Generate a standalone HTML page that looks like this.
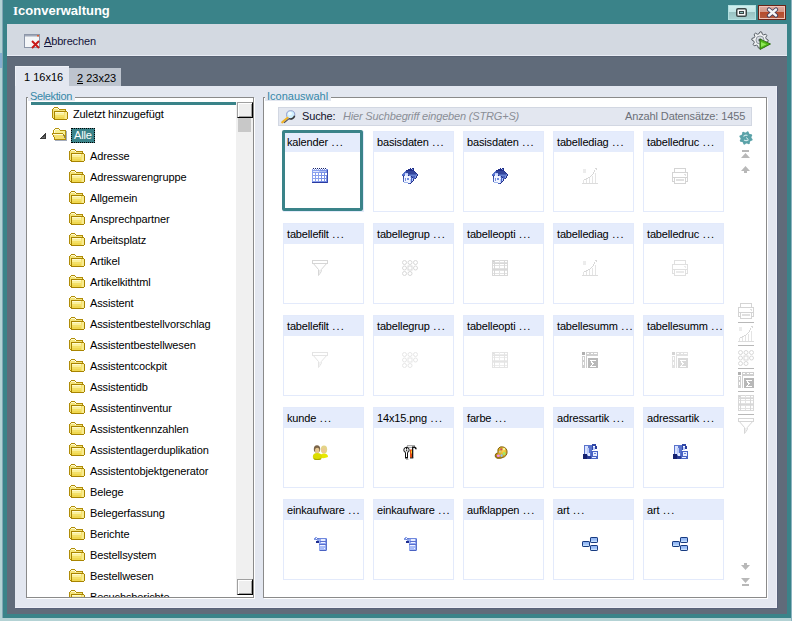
<!DOCTYPE html>
<html><head><meta charset="utf-8"><style>
*{box-sizing:border-box}
html,body{margin:0;padding:0}
body{width:792px;height:621px;overflow:hidden;position:relative;background:#b3d2d4;font-family:'Liberation Sans', sans-serif;font-size:11px;color:#000}
div,svg{position:absolute}
.frame{left:3px;top:0;width:788px;height:618px;background:#3a8389}
.title{left:13px;top:3px;letter-spacing:0px;font-weight:bold;font-size:13px;line-height:16px;color:#fff;white-space:nowrap}
.tb{left:7px;top:24px;width:780px;height:32px;background:#d3d9e1;border-bottom:1px solid #e8ecf4}
.content{left:7px;top:56px;width:780px;height:558px;background:#606b7a;border-top:1px solid #566172}
.tab{line-height:13px;white-space:nowrap}
.panel{left:15px;top:86px;width:762px;height:522px;background:#e3e7f0;border-right:1px solid #eceef6;border-bottom:1px solid #eceef6;box-shadow:1px 1px 0 #58627a}
.gb{border:1px solid #8a8a8a;box-shadow:inset 1px 1px 0 #fff, 1px 1px 0 #fff}
.gl{background:#e3e7f0;color:#3687a8;line-height:13px;padding:0 3px 0 2px;white-space:nowrap;height:11px;overflow:visible;letter-spacing:-0.37px}
.t{line-height:13px;white-space:nowrap;letter-spacing:-0.12px}
.sbb{width:16px;height:16px;background:#eeeeee;border-top:1px solid #a0a0a0;border-left:1px solid #a0a0a0;border-right:1px solid #000;border-bottom:1px solid #000;box-shadow:inset 1px 1px 0 #fff, inset -1px -1px 0 #a0a0a0}
.sel{width:24px;height:15px;background:#3a8389;border:1px dotted #000}
.card{width:81px;height:81px;border:1px solid #e3eafb;background:#fff}
.ch{left:0;top:0;width:79px;height:20px;background:#e5ecfc;padding:0 0 0 3px;line-height:13px;padding-top:4px;white-space:nowrap}
.ci{width:16px;height:16px}
.hw{letter-spacing:-0.15px}
.dots{letter-spacing:1.1px;margin-left:0.5px}
.ci svg{left:0;top:0}
.selcard{width:81px;height:81px;border:3px solid #3a8389;border-radius:2px}
</style></head><body>
<div class="frame"></div>
<div style="left:2px;top:0;width:1px;height:618px;background:#80a6b4"></div>
<div style="left:0;top:53px;width:2px;height:15px;background:#86aed0"></div>
<div style="left:791px;top:0;width:1px;height:621px;background:#8cb4c0"></div>
<div class="title"><span style="font-family:'Liberation Serif',serif;font-size:13px;line-height:10px;">I</span>converwaltung</div>
<!-- title buttons -->
<div style="left:728px;top:5px;width:28px;height:15px;background:linear-gradient(#d0eeee 0,#c0e6e6 47%,#98c2c2 47%,#a8d2d2 100%);border:1px solid #b2e0e0"></div>
<svg style="left:736px;top:8px" width="11" height="9" viewBox="0 0 11 9"><rect x="0.75" y="0.75" width="9.5" height="7.5" rx="1.3" fill="#f8f8f8" stroke="#3a4646" stroke-width="1.5"/><rect x="3.5" y="3.5" width="4" height="2" fill="#8cbaba" stroke="#3a4646" stroke-width="1"/></svg>
<div style="left:758px;top:5px;width:28px;height:15px;background:#6a2418;padding:1px"><div style="left:1px;top:1px;width:26px;height:13px;border:1px solid #f2c4b8;background:linear-gradient(#dca89c 0,#d49888 42%,#b84a2a 42%,#b45a3e 100%)"></div></div>
<svg style="left:766px;top:7px" width="13" height="11" viewBox="0 0 13 11"><path d="M3 2.5 L10 8.5 M10 2.5 L3 8.5" stroke="#3c3c5c" stroke-width="4.2" stroke-linecap="round"/><path d="M3 2.5 L10 8.5 M10 2.5 L3 8.5" stroke="#f6f6f6" stroke-width="2.4" stroke-linecap="round"/></svg>

<div class="tb"></div>
<!-- abbrechen icon -->
<svg style="left:24px;top:34px" width="17" height="16" viewBox="0 0 17 16">
<rect x="0.5" y="0.5" width="15" height="13" fill="#f4f6f8" stroke="#8c96a8"/>
<rect x="1" y="1" width="14" height="1.5" fill="#a0a8b8"/>
<rect x="13" y="1" width="2" height="1.5" fill="#e06030"/>
<path d="M8 7 L15 14 M15 7 L8 14" stroke="#c81818" stroke-width="2"/>
</svg>
<div class="t" style="left:44px;top:35px;color:#14143a;letter-spacing:-0.15px">Abbrechen</div>
<div style="left:44px;top:46px;width:8px;height:1px;background:#14143a"></div>
<!-- gear play icon -->
<svg style="left:751px;top:31px" width="21" height="19" viewBox="0 0 21 19">
<path d="M9.00 0.80 L10.60 0.96 L11.37 3.27 L12.44 3.84 L14.80 3.20 L15.82 4.44 L14.73 6.63 L15.08 7.79 L17.20 9.00 L17.04 10.60 L14.73 11.37 L14.16 12.44 L14.80 14.80 L13.56 15.82 L11.37 14.73 L10.21 15.08 L9.00 17.20 L7.40 17.04 L6.63 14.73 L5.56 14.16 L3.20 14.80 L2.18 13.56 L3.27 11.37 L2.92 10.21 L0.80 9.00 L0.96 7.40 L3.27 6.63 L3.84 5.56 L3.20 3.20 L4.44 2.18 L6.63 3.27 L7.79 2.92Z" fill="#eef0f2" stroke="#4a5058" stroke-width="0.9"/>
<circle cx="9" cy="9" r="4" fill="#d8dce2" stroke="#8a929c" stroke-width="0.9"/>
<circle cx="9" cy="9" r="1.6" fill="#505868"/>
<path d="M9 8 L19.5 13 L9 18.5Z" fill="#50b818" stroke="#2a6a10" stroke-width="0.9"/>
<path d="M10 11 L15.5 13.3 L10 16Z" fill="#90e858"/>
</svg>
<div class="content"></div>
<!-- tabs -->
<div style="left:68px;top:68px;width:53px;height:18px;background:#bdc4ce"></div>
<div class="tab" style="left:77px;top:72px">2 23x23</div>
<div style="left:77px;top:83px;width:6px;height:1px;background:#000"></div>
<div style="left:15px;top:66px;width:54px;height:21px;background:#e3e7f0;border-top:1px solid #eef1f7;border-left:1px solid #eef1f7"></div>
<div class="panel"></div>
<div class="tab" style="left:24px;top:71px">1 16x16</div>

<!-- group box selektion -->
<div class="gb" style="left:26px;top:97px;width:228px;height:501px"></div>
<div style="left:27px;top:98px;width:226px;height:499px;background:#fff;overflow:hidden">
<div style="left:4px;top:4px;width:205px;height:3px;background:#3a8389"></div>
<svg class="ic" style="left:25px;top:9px" width="16" height="14" viewBox="0 0 16 14" shape-rendering="crispEdges">
<path d="M2 0h4v1H2zM1 1h1v1H1zM6 1h1v1H6zM7 2h6v1H7zM0 2h1v9H0zM13 2h1v2h-1z" fill="#b08c08"/>
<path d="M1 2h5v1h7v1H2v8H1z" fill="#f4e47a"/>
<path d="M2 1h4v1H2z" fill="#fffbd0"/>
<rect x="3" y="5" width="12" height="7" fill="#f0d850"/>
<rect x="3" y="8" width="12" height="2" fill="#f4e068"/>
<rect x="3" y="5" width="12" height="3" fill="#faf09a"/>
<rect x="3" y="5" width="12" height="1" fill="#fffbd0"/>
<path d="M2 4h13v1H2zM2 5h1v7H2zM15 5h1v7h-1zM2 12h13v1H2zM1 11h1v1H1z" fill="#a88400"/>
<rect x="12" y="5" width="1" height="7" fill="#f6e070"/><rect x="13" y="5" width="2" height="7" fill="#f8ec90"/>
</svg><div class="t" style="left:46px;top:10px">Zuletzt hinzugefügt</div><svg class="ic" style="left:13px;top:35px" width="7" height="7" viewBox="0 0 7 7" shape-rendering="crispEdges"><path d="M5 0h1v6H0V5h1V4h1V3h1V2h1V1h1z" fill="#3a3a3a"/><path d="M4 3h1v2H2V4h1z" fill="#6a6a6a"/></svg><svg class="ic" style="left:25px;top:30px" width="16" height="14" viewBox="0 0 16 14" shape-rendering="crispEdges">
<path d="M2 1h6v1h5v10H2z" fill="#f8f090"/>
<path d="M3 1h4v1H3z" fill="#fffce0"/>
<path d="M2 2h1v3H2z" fill="#fffce0"/>
<path d="M14 3h1v10h-1zM3 12h12v1H3z" fill="#a4acbc"/>
<path d="M3 0h4v1H3zM2 1h1v1H2zM7 1h1v1H7zM8 2h5v1H8zM1 2h1v3H1zM13 2h1v10h-1z" fill="#b49410"/>
<path d="M1 6h10v1H1zM1 7h11v1H1zM2 8h10v1H2zM2 9h11v1H2zM3 10h10v1H3z" fill="#f4e070"/>
<path d="M1 6h10v1H1z" fill="#fffbd8"/>
<path d="M0 5h11v1H0zM0 6h1v1H0zM1 7h1v2H1zM2 9h1v2H2zM2 11h12v1H2zM11 6h1v1h-1zM12 7h1v2h-1z" fill="#b08c0c"/>
<path d="M11 7h1v1h-1zM12 9h1v1h-1z" fill="#7a7e90"/>
</svg><div class="sel" style="left:44px;top:30px"></div><div class="t" style="left:47px;top:31px;color:#fff">Alle</div><svg class="ic" style="left:42px;top:51px" width="16" height="14" viewBox="0 0 16 14" shape-rendering="crispEdges">
<path d="M2 0h4v1H2zM1 1h1v1H1zM6 1h1v1H6zM7 2h6v1H7zM0 2h1v9H0zM13 2h1v2h-1z" fill="#b08c08"/>
<path d="M1 2h5v1h7v1H2v8H1z" fill="#f4e47a"/>
<path d="M2 1h4v1H2z" fill="#fffbd0"/>
<rect x="3" y="5" width="12" height="7" fill="#f0d850"/>
<rect x="3" y="8" width="12" height="2" fill="#f4e068"/>
<rect x="3" y="5" width="12" height="3" fill="#faf09a"/>
<rect x="3" y="5" width="12" height="1" fill="#fffbd0"/>
<path d="M2 4h13v1H2zM2 5h1v7H2zM15 5h1v7h-1zM2 12h13v1H2zM1 11h1v1H1z" fill="#a88400"/>
<rect x="12" y="5" width="1" height="7" fill="#f6e070"/><rect x="13" y="5" width="2" height="7" fill="#f8ec90"/>
</svg><div class="t" style="left:63px;top:52px">Adresse</div><svg class="ic" style="left:42px;top:72px" width="16" height="14" viewBox="0 0 16 14" shape-rendering="crispEdges">
<path d="M2 0h4v1H2zM1 1h1v1H1zM6 1h1v1H6zM7 2h6v1H7zM0 2h1v9H0zM13 2h1v2h-1z" fill="#b08c08"/>
<path d="M1 2h5v1h7v1H2v8H1z" fill="#f4e47a"/>
<path d="M2 1h4v1H2z" fill="#fffbd0"/>
<rect x="3" y="5" width="12" height="7" fill="#f0d850"/>
<rect x="3" y="8" width="12" height="2" fill="#f4e068"/>
<rect x="3" y="5" width="12" height="3" fill="#faf09a"/>
<rect x="3" y="5" width="12" height="1" fill="#fffbd0"/>
<path d="M2 4h13v1H2zM2 5h1v7H2zM15 5h1v7h-1zM2 12h13v1H2zM1 11h1v1H1z" fill="#a88400"/>
<rect x="12" y="5" width="1" height="7" fill="#f6e070"/><rect x="13" y="5" width="2" height="7" fill="#f8ec90"/>
</svg><div class="t" style="left:63px;top:73px">Adresswarengruppe</div><svg class="ic" style="left:42px;top:93px" width="16" height="14" viewBox="0 0 16 14" shape-rendering="crispEdges">
<path d="M2 0h4v1H2zM1 1h1v1H1zM6 1h1v1H6zM7 2h6v1H7zM0 2h1v9H0zM13 2h1v2h-1z" fill="#b08c08"/>
<path d="M1 2h5v1h7v1H2v8H1z" fill="#f4e47a"/>
<path d="M2 1h4v1H2z" fill="#fffbd0"/>
<rect x="3" y="5" width="12" height="7" fill="#f0d850"/>
<rect x="3" y="8" width="12" height="2" fill="#f4e068"/>
<rect x="3" y="5" width="12" height="3" fill="#faf09a"/>
<rect x="3" y="5" width="12" height="1" fill="#fffbd0"/>
<path d="M2 4h13v1H2zM2 5h1v7H2zM15 5h1v7h-1zM2 12h13v1H2zM1 11h1v1H1z" fill="#a88400"/>
<rect x="12" y="5" width="1" height="7" fill="#f6e070"/><rect x="13" y="5" width="2" height="7" fill="#f8ec90"/>
</svg><div class="t" style="left:63px;top:94px">Allgemein</div><svg class="ic" style="left:42px;top:114px" width="16" height="14" viewBox="0 0 16 14" shape-rendering="crispEdges">
<path d="M2 0h4v1H2zM1 1h1v1H1zM6 1h1v1H6zM7 2h6v1H7zM0 2h1v9H0zM13 2h1v2h-1z" fill="#b08c08"/>
<path d="M1 2h5v1h7v1H2v8H1z" fill="#f4e47a"/>
<path d="M2 1h4v1H2z" fill="#fffbd0"/>
<rect x="3" y="5" width="12" height="7" fill="#f0d850"/>
<rect x="3" y="8" width="12" height="2" fill="#f4e068"/>
<rect x="3" y="5" width="12" height="3" fill="#faf09a"/>
<rect x="3" y="5" width="12" height="1" fill="#fffbd0"/>
<path d="M2 4h13v1H2zM2 5h1v7H2zM15 5h1v7h-1zM2 12h13v1H2zM1 11h1v1H1z" fill="#a88400"/>
<rect x="12" y="5" width="1" height="7" fill="#f6e070"/><rect x="13" y="5" width="2" height="7" fill="#f8ec90"/>
</svg><div class="t" style="left:63px;top:115px">Ansprechpartner</div><svg class="ic" style="left:42px;top:135px" width="16" height="14" viewBox="0 0 16 14" shape-rendering="crispEdges">
<path d="M2 0h4v1H2zM1 1h1v1H1zM6 1h1v1H6zM7 2h6v1H7zM0 2h1v9H0zM13 2h1v2h-1z" fill="#b08c08"/>
<path d="M1 2h5v1h7v1H2v8H1z" fill="#f4e47a"/>
<path d="M2 1h4v1H2z" fill="#fffbd0"/>
<rect x="3" y="5" width="12" height="7" fill="#f0d850"/>
<rect x="3" y="8" width="12" height="2" fill="#f4e068"/>
<rect x="3" y="5" width="12" height="3" fill="#faf09a"/>
<rect x="3" y="5" width="12" height="1" fill="#fffbd0"/>
<path d="M2 4h13v1H2zM2 5h1v7H2zM15 5h1v7h-1zM2 12h13v1H2zM1 11h1v1H1z" fill="#a88400"/>
<rect x="12" y="5" width="1" height="7" fill="#f6e070"/><rect x="13" y="5" width="2" height="7" fill="#f8ec90"/>
</svg><div class="t" style="left:63px;top:136px">Arbeitsplatz</div><svg class="ic" style="left:42px;top:156px" width="16" height="14" viewBox="0 0 16 14" shape-rendering="crispEdges">
<path d="M2 0h4v1H2zM1 1h1v1H1zM6 1h1v1H6zM7 2h6v1H7zM0 2h1v9H0zM13 2h1v2h-1z" fill="#b08c08"/>
<path d="M1 2h5v1h7v1H2v8H1z" fill="#f4e47a"/>
<path d="M2 1h4v1H2z" fill="#fffbd0"/>
<rect x="3" y="5" width="12" height="7" fill="#f0d850"/>
<rect x="3" y="8" width="12" height="2" fill="#f4e068"/>
<rect x="3" y="5" width="12" height="3" fill="#faf09a"/>
<rect x="3" y="5" width="12" height="1" fill="#fffbd0"/>
<path d="M2 4h13v1H2zM2 5h1v7H2zM15 5h1v7h-1zM2 12h13v1H2zM1 11h1v1H1z" fill="#a88400"/>
<rect x="12" y="5" width="1" height="7" fill="#f6e070"/><rect x="13" y="5" width="2" height="7" fill="#f8ec90"/>
</svg><div class="t" style="left:63px;top:157px">Artikel</div><svg class="ic" style="left:42px;top:177px" width="16" height="14" viewBox="0 0 16 14" shape-rendering="crispEdges">
<path d="M2 0h4v1H2zM1 1h1v1H1zM6 1h1v1H6zM7 2h6v1H7zM0 2h1v9H0zM13 2h1v2h-1z" fill="#b08c08"/>
<path d="M1 2h5v1h7v1H2v8H1z" fill="#f4e47a"/>
<path d="M2 1h4v1H2z" fill="#fffbd0"/>
<rect x="3" y="5" width="12" height="7" fill="#f0d850"/>
<rect x="3" y="8" width="12" height="2" fill="#f4e068"/>
<rect x="3" y="5" width="12" height="3" fill="#faf09a"/>
<rect x="3" y="5" width="12" height="1" fill="#fffbd0"/>
<path d="M2 4h13v1H2zM2 5h1v7H2zM15 5h1v7h-1zM2 12h13v1H2zM1 11h1v1H1z" fill="#a88400"/>
<rect x="12" y="5" width="1" height="7" fill="#f6e070"/><rect x="13" y="5" width="2" height="7" fill="#f8ec90"/>
</svg><div class="t" style="left:63px;top:178px">Artikelkithtml</div><svg class="ic" style="left:42px;top:198px" width="16" height="14" viewBox="0 0 16 14" shape-rendering="crispEdges">
<path d="M2 0h4v1H2zM1 1h1v1H1zM6 1h1v1H6zM7 2h6v1H7zM0 2h1v9H0zM13 2h1v2h-1z" fill="#b08c08"/>
<path d="M1 2h5v1h7v1H2v8H1z" fill="#f4e47a"/>
<path d="M2 1h4v1H2z" fill="#fffbd0"/>
<rect x="3" y="5" width="12" height="7" fill="#f0d850"/>
<rect x="3" y="8" width="12" height="2" fill="#f4e068"/>
<rect x="3" y="5" width="12" height="3" fill="#faf09a"/>
<rect x="3" y="5" width="12" height="1" fill="#fffbd0"/>
<path d="M2 4h13v1H2zM2 5h1v7H2zM15 5h1v7h-1zM2 12h13v1H2zM1 11h1v1H1z" fill="#a88400"/>
<rect x="12" y="5" width="1" height="7" fill="#f6e070"/><rect x="13" y="5" width="2" height="7" fill="#f8ec90"/>
</svg><div class="t" style="left:63px;top:199px">Assistent</div><svg class="ic" style="left:42px;top:219px" width="16" height="14" viewBox="0 0 16 14" shape-rendering="crispEdges">
<path d="M2 0h4v1H2zM1 1h1v1H1zM6 1h1v1H6zM7 2h6v1H7zM0 2h1v9H0zM13 2h1v2h-1z" fill="#b08c08"/>
<path d="M1 2h5v1h7v1H2v8H1z" fill="#f4e47a"/>
<path d="M2 1h4v1H2z" fill="#fffbd0"/>
<rect x="3" y="5" width="12" height="7" fill="#f0d850"/>
<rect x="3" y="8" width="12" height="2" fill="#f4e068"/>
<rect x="3" y="5" width="12" height="3" fill="#faf09a"/>
<rect x="3" y="5" width="12" height="1" fill="#fffbd0"/>
<path d="M2 4h13v1H2zM2 5h1v7H2zM15 5h1v7h-1zM2 12h13v1H2zM1 11h1v1H1z" fill="#a88400"/>
<rect x="12" y="5" width="1" height="7" fill="#f6e070"/><rect x="13" y="5" width="2" height="7" fill="#f8ec90"/>
</svg><div class="t" style="left:63px;top:220px">Assistentbestellvorschlag</div><svg class="ic" style="left:42px;top:240px" width="16" height="14" viewBox="0 0 16 14" shape-rendering="crispEdges">
<path d="M2 0h4v1H2zM1 1h1v1H1zM6 1h1v1H6zM7 2h6v1H7zM0 2h1v9H0zM13 2h1v2h-1z" fill="#b08c08"/>
<path d="M1 2h5v1h7v1H2v8H1z" fill="#f4e47a"/>
<path d="M2 1h4v1H2z" fill="#fffbd0"/>
<rect x="3" y="5" width="12" height="7" fill="#f0d850"/>
<rect x="3" y="8" width="12" height="2" fill="#f4e068"/>
<rect x="3" y="5" width="12" height="3" fill="#faf09a"/>
<rect x="3" y="5" width="12" height="1" fill="#fffbd0"/>
<path d="M2 4h13v1H2zM2 5h1v7H2zM15 5h1v7h-1zM2 12h13v1H2zM1 11h1v1H1z" fill="#a88400"/>
<rect x="12" y="5" width="1" height="7" fill="#f6e070"/><rect x="13" y="5" width="2" height="7" fill="#f8ec90"/>
</svg><div class="t" style="left:63px;top:241px">Assistentbestellwesen</div><svg class="ic" style="left:42px;top:261px" width="16" height="14" viewBox="0 0 16 14" shape-rendering="crispEdges">
<path d="M2 0h4v1H2zM1 1h1v1H1zM6 1h1v1H6zM7 2h6v1H7zM0 2h1v9H0zM13 2h1v2h-1z" fill="#b08c08"/>
<path d="M1 2h5v1h7v1H2v8H1z" fill="#f4e47a"/>
<path d="M2 1h4v1H2z" fill="#fffbd0"/>
<rect x="3" y="5" width="12" height="7" fill="#f0d850"/>
<rect x="3" y="8" width="12" height="2" fill="#f4e068"/>
<rect x="3" y="5" width="12" height="3" fill="#faf09a"/>
<rect x="3" y="5" width="12" height="1" fill="#fffbd0"/>
<path d="M2 4h13v1H2zM2 5h1v7H2zM15 5h1v7h-1zM2 12h13v1H2zM1 11h1v1H1z" fill="#a88400"/>
<rect x="12" y="5" width="1" height="7" fill="#f6e070"/><rect x="13" y="5" width="2" height="7" fill="#f8ec90"/>
</svg><div class="t" style="left:63px;top:262px">Assistentcockpit</div><svg class="ic" style="left:42px;top:282px" width="16" height="14" viewBox="0 0 16 14" shape-rendering="crispEdges">
<path d="M2 0h4v1H2zM1 1h1v1H1zM6 1h1v1H6zM7 2h6v1H7zM0 2h1v9H0zM13 2h1v2h-1z" fill="#b08c08"/>
<path d="M1 2h5v1h7v1H2v8H1z" fill="#f4e47a"/>
<path d="M2 1h4v1H2z" fill="#fffbd0"/>
<rect x="3" y="5" width="12" height="7" fill="#f0d850"/>
<rect x="3" y="8" width="12" height="2" fill="#f4e068"/>
<rect x="3" y="5" width="12" height="3" fill="#faf09a"/>
<rect x="3" y="5" width="12" height="1" fill="#fffbd0"/>
<path d="M2 4h13v1H2zM2 5h1v7H2zM15 5h1v7h-1zM2 12h13v1H2zM1 11h1v1H1z" fill="#a88400"/>
<rect x="12" y="5" width="1" height="7" fill="#f6e070"/><rect x="13" y="5" width="2" height="7" fill="#f8ec90"/>
</svg><div class="t" style="left:63px;top:283px">Assistentidb</div><svg class="ic" style="left:42px;top:303px" width="16" height="14" viewBox="0 0 16 14" shape-rendering="crispEdges">
<path d="M2 0h4v1H2zM1 1h1v1H1zM6 1h1v1H6zM7 2h6v1H7zM0 2h1v9H0zM13 2h1v2h-1z" fill="#b08c08"/>
<path d="M1 2h5v1h7v1H2v8H1z" fill="#f4e47a"/>
<path d="M2 1h4v1H2z" fill="#fffbd0"/>
<rect x="3" y="5" width="12" height="7" fill="#f0d850"/>
<rect x="3" y="8" width="12" height="2" fill="#f4e068"/>
<rect x="3" y="5" width="12" height="3" fill="#faf09a"/>
<rect x="3" y="5" width="12" height="1" fill="#fffbd0"/>
<path d="M2 4h13v1H2zM2 5h1v7H2zM15 5h1v7h-1zM2 12h13v1H2zM1 11h1v1H1z" fill="#a88400"/>
<rect x="12" y="5" width="1" height="7" fill="#f6e070"/><rect x="13" y="5" width="2" height="7" fill="#f8ec90"/>
</svg><div class="t" style="left:63px;top:304px">Assistentinventur</div><svg class="ic" style="left:42px;top:324px" width="16" height="14" viewBox="0 0 16 14" shape-rendering="crispEdges">
<path d="M2 0h4v1H2zM1 1h1v1H1zM6 1h1v1H6zM7 2h6v1H7zM0 2h1v9H0zM13 2h1v2h-1z" fill="#b08c08"/>
<path d="M1 2h5v1h7v1H2v8H1z" fill="#f4e47a"/>
<path d="M2 1h4v1H2z" fill="#fffbd0"/>
<rect x="3" y="5" width="12" height="7" fill="#f0d850"/>
<rect x="3" y="8" width="12" height="2" fill="#f4e068"/>
<rect x="3" y="5" width="12" height="3" fill="#faf09a"/>
<rect x="3" y="5" width="12" height="1" fill="#fffbd0"/>
<path d="M2 4h13v1H2zM2 5h1v7H2zM15 5h1v7h-1zM2 12h13v1H2zM1 11h1v1H1z" fill="#a88400"/>
<rect x="12" y="5" width="1" height="7" fill="#f6e070"/><rect x="13" y="5" width="2" height="7" fill="#f8ec90"/>
</svg><div class="t" style="left:63px;top:325px">Assistentkennzahlen</div><svg class="ic" style="left:42px;top:345px" width="16" height="14" viewBox="0 0 16 14" shape-rendering="crispEdges">
<path d="M2 0h4v1H2zM1 1h1v1H1zM6 1h1v1H6zM7 2h6v1H7zM0 2h1v9H0zM13 2h1v2h-1z" fill="#b08c08"/>
<path d="M1 2h5v1h7v1H2v8H1z" fill="#f4e47a"/>
<path d="M2 1h4v1H2z" fill="#fffbd0"/>
<rect x="3" y="5" width="12" height="7" fill="#f0d850"/>
<rect x="3" y="8" width="12" height="2" fill="#f4e068"/>
<rect x="3" y="5" width="12" height="3" fill="#faf09a"/>
<rect x="3" y="5" width="12" height="1" fill="#fffbd0"/>
<path d="M2 4h13v1H2zM2 5h1v7H2zM15 5h1v7h-1zM2 12h13v1H2zM1 11h1v1H1z" fill="#a88400"/>
<rect x="12" y="5" width="1" height="7" fill="#f6e070"/><rect x="13" y="5" width="2" height="7" fill="#f8ec90"/>
</svg><div class="t" style="left:63px;top:346px">Assistentlagerduplikation</div><svg class="ic" style="left:42px;top:366px" width="16" height="14" viewBox="0 0 16 14" shape-rendering="crispEdges">
<path d="M2 0h4v1H2zM1 1h1v1H1zM6 1h1v1H6zM7 2h6v1H7zM0 2h1v9H0zM13 2h1v2h-1z" fill="#b08c08"/>
<path d="M1 2h5v1h7v1H2v8H1z" fill="#f4e47a"/>
<path d="M2 1h4v1H2z" fill="#fffbd0"/>
<rect x="3" y="5" width="12" height="7" fill="#f0d850"/>
<rect x="3" y="8" width="12" height="2" fill="#f4e068"/>
<rect x="3" y="5" width="12" height="3" fill="#faf09a"/>
<rect x="3" y="5" width="12" height="1" fill="#fffbd0"/>
<path d="M2 4h13v1H2zM2 5h1v7H2zM15 5h1v7h-1zM2 12h13v1H2zM1 11h1v1H1z" fill="#a88400"/>
<rect x="12" y="5" width="1" height="7" fill="#f6e070"/><rect x="13" y="5" width="2" height="7" fill="#f8ec90"/>
</svg><div class="t" style="left:63px;top:367px">Assistentobjektgenerator</div><svg class="ic" style="left:42px;top:387px" width="16" height="14" viewBox="0 0 16 14" shape-rendering="crispEdges">
<path d="M2 0h4v1H2zM1 1h1v1H1zM6 1h1v1H6zM7 2h6v1H7zM0 2h1v9H0zM13 2h1v2h-1z" fill="#b08c08"/>
<path d="M1 2h5v1h7v1H2v8H1z" fill="#f4e47a"/>
<path d="M2 1h4v1H2z" fill="#fffbd0"/>
<rect x="3" y="5" width="12" height="7" fill="#f0d850"/>
<rect x="3" y="8" width="12" height="2" fill="#f4e068"/>
<rect x="3" y="5" width="12" height="3" fill="#faf09a"/>
<rect x="3" y="5" width="12" height="1" fill="#fffbd0"/>
<path d="M2 4h13v1H2zM2 5h1v7H2zM15 5h1v7h-1zM2 12h13v1H2zM1 11h1v1H1z" fill="#a88400"/>
<rect x="12" y="5" width="1" height="7" fill="#f6e070"/><rect x="13" y="5" width="2" height="7" fill="#f8ec90"/>
</svg><div class="t" style="left:63px;top:388px">Belege</div><svg class="ic" style="left:42px;top:408px" width="16" height="14" viewBox="0 0 16 14" shape-rendering="crispEdges">
<path d="M2 0h4v1H2zM1 1h1v1H1zM6 1h1v1H6zM7 2h6v1H7zM0 2h1v9H0zM13 2h1v2h-1z" fill="#b08c08"/>
<path d="M1 2h5v1h7v1H2v8H1z" fill="#f4e47a"/>
<path d="M2 1h4v1H2z" fill="#fffbd0"/>
<rect x="3" y="5" width="12" height="7" fill="#f0d850"/>
<rect x="3" y="8" width="12" height="2" fill="#f4e068"/>
<rect x="3" y="5" width="12" height="3" fill="#faf09a"/>
<rect x="3" y="5" width="12" height="1" fill="#fffbd0"/>
<path d="M2 4h13v1H2zM2 5h1v7H2zM15 5h1v7h-1zM2 12h13v1H2zM1 11h1v1H1z" fill="#a88400"/>
<rect x="12" y="5" width="1" height="7" fill="#f6e070"/><rect x="13" y="5" width="2" height="7" fill="#f8ec90"/>
</svg><div class="t" style="left:63px;top:409px">Belegerfassung</div><svg class="ic" style="left:42px;top:429px" width="16" height="14" viewBox="0 0 16 14" shape-rendering="crispEdges">
<path d="M2 0h4v1H2zM1 1h1v1H1zM6 1h1v1H6zM7 2h6v1H7zM0 2h1v9H0zM13 2h1v2h-1z" fill="#b08c08"/>
<path d="M1 2h5v1h7v1H2v8H1z" fill="#f4e47a"/>
<path d="M2 1h4v1H2z" fill="#fffbd0"/>
<rect x="3" y="5" width="12" height="7" fill="#f0d850"/>
<rect x="3" y="8" width="12" height="2" fill="#f4e068"/>
<rect x="3" y="5" width="12" height="3" fill="#faf09a"/>
<rect x="3" y="5" width="12" height="1" fill="#fffbd0"/>
<path d="M2 4h13v1H2zM2 5h1v7H2zM15 5h1v7h-1zM2 12h13v1H2zM1 11h1v1H1z" fill="#a88400"/>
<rect x="12" y="5" width="1" height="7" fill="#f6e070"/><rect x="13" y="5" width="2" height="7" fill="#f8ec90"/>
</svg><div class="t" style="left:63px;top:430px">Berichte</div><svg class="ic" style="left:42px;top:450px" width="16" height="14" viewBox="0 0 16 14" shape-rendering="crispEdges">
<path d="M2 0h4v1H2zM1 1h1v1H1zM6 1h1v1H6zM7 2h6v1H7zM0 2h1v9H0zM13 2h1v2h-1z" fill="#b08c08"/>
<path d="M1 2h5v1h7v1H2v8H1z" fill="#f4e47a"/>
<path d="M2 1h4v1H2z" fill="#fffbd0"/>
<rect x="3" y="5" width="12" height="7" fill="#f0d850"/>
<rect x="3" y="8" width="12" height="2" fill="#f4e068"/>
<rect x="3" y="5" width="12" height="3" fill="#faf09a"/>
<rect x="3" y="5" width="12" height="1" fill="#fffbd0"/>
<path d="M2 4h13v1H2zM2 5h1v7H2zM15 5h1v7h-1zM2 12h13v1H2zM1 11h1v1H1z" fill="#a88400"/>
<rect x="12" y="5" width="1" height="7" fill="#f6e070"/><rect x="13" y="5" width="2" height="7" fill="#f8ec90"/>
</svg><div class="t" style="left:63px;top:451px">Bestellsystem</div><svg class="ic" style="left:42px;top:471px" width="16" height="14" viewBox="0 0 16 14" shape-rendering="crispEdges">
<path d="M2 0h4v1H2zM1 1h1v1H1zM6 1h1v1H6zM7 2h6v1H7zM0 2h1v9H0zM13 2h1v2h-1z" fill="#b08c08"/>
<path d="M1 2h5v1h7v1H2v8H1z" fill="#f4e47a"/>
<path d="M2 1h4v1H2z" fill="#fffbd0"/>
<rect x="3" y="5" width="12" height="7" fill="#f0d850"/>
<rect x="3" y="8" width="12" height="2" fill="#f4e068"/>
<rect x="3" y="5" width="12" height="3" fill="#faf09a"/>
<rect x="3" y="5" width="12" height="1" fill="#fffbd0"/>
<path d="M2 4h13v1H2zM2 5h1v7H2zM15 5h1v7h-1zM2 12h13v1H2zM1 11h1v1H1z" fill="#a88400"/>
<rect x="12" y="5" width="1" height="7" fill="#f6e070"/><rect x="13" y="5" width="2" height="7" fill="#f8ec90"/>
</svg><div class="t" style="left:63px;top:472px">Bestellwesen</div><svg class="ic" style="left:42px;top:492px" width="16" height="14" viewBox="0 0 16 14" shape-rendering="crispEdges">
<path d="M2 0h4v1H2zM1 1h1v1H1zM6 1h1v1H6zM7 2h6v1H7zM0 2h1v9H0zM13 2h1v2h-1z" fill="#b08c08"/>
<path d="M1 2h5v1h7v1H2v8H1z" fill="#f4e47a"/>
<path d="M2 1h4v1H2z" fill="#fffbd0"/>
<rect x="3" y="5" width="12" height="7" fill="#f0d850"/>
<rect x="3" y="8" width="12" height="2" fill="#f4e068"/>
<rect x="3" y="5" width="12" height="3" fill="#faf09a"/>
<rect x="3" y="5" width="12" height="1" fill="#fffbd0"/>
<path d="M2 4h13v1H2zM2 5h1v7H2zM15 5h1v7h-1zM2 12h13v1H2zM1 11h1v1H1z" fill="#a88400"/>
<rect x="12" y="5" width="1" height="7" fill="#f6e070"/><rect x="13" y="5" width="2" height="7" fill="#f8ec90"/>
</svg><div class="t" style="left:63px;top:493px">Besuchsberichte</div>
<!-- scrollbar -->
<div style="left:209px;top:4px;width:17px;height:493px;background:#f0f0f0"></div>
<div class="sbb" style="left:210px;top:4px"></div>
<div style="left:211px;top:20px;width:13px;height:14px;background:#c8c8c8"></div>
<div class="sbb" style="left:210px;top:481px"></div>
</div>
<div class="gl" style="left:28px;top:90px">Selektion</div>

<!-- group box iconauswahl -->
<div class="gb" style="left:263px;top:97px;width:504px;height:501px"></div>
<div style="left:264px;top:98px;width:502px;height:499px;background:#fff"></div>
<div class="gl" style="left:265px;top:90px;letter-spacing:0">Iconauswahl</div>
<!-- search -->
<div style="left:278px;top:107px;width:474px;height:19px;background:#e3e7f0;border:1px solid #d2d7e2"></div>
<svg style="left:280px;top:108px" width="16" height="16" viewBox="0 0 16 16">
<circle cx="10.7" cy="6.8" r="4.1" fill="#d0f0ff" stroke="#8a94c8" stroke-width="0.9"/>
<path d="M14.6 7.8 A4.1 4.1 0 0 1 9 10.6" stroke="#383838" stroke-width="1.5" fill="none"/>
<circle cx="10" cy="5.6" r="1.9" fill="#f2fcff"/>
<path d="M7.6 9.8 L2.2 14.4" stroke="#f0b428" stroke-width="2.1" stroke-linecap="round"/>
<path d="M8.8 10.8 L4 14.8" stroke="#4a4a58" stroke-width="1.1"/>
</svg>
<div class="t" style="left:302px;top:110px;color:#10102a">Suche:</div>
<div class="t" style="left:343px;top:110px;color:#8a8e96;font-style:italic;letter-spacing:-0.17px">Hier Suchbegriff eingeben (STRG+S)</div>
<div class="t" style="left:625px;top:110px;color:#6c7078;letter-spacing:-0.12px">Anzahl Datensätze: 1455</div>

<div class="card" style="left:283px;top:131px"><div class="ch"><span class="hw">kalender</span> <span class="dots">...</span></div></div><div class="ci" style="left:312px;top:168px"><svg width="16" height="16" viewBox="0 0 16 16" shape-rendering="crispEdges">
<rect x="0" y="1" width="16" height="14" fill="#7890e6"/>
<rect x="0" y="1" width="8" height="13" fill="#8aa0ee"/>
<rect x="0" y="14" width="16" height="1" fill="#2a3aa0"/>
<rect x="15" y="2" width="1" height="13" fill="#3a4cb0"/>
<path d="M1 0h1v1H1zM3 0h1v1H3zM5 0h1v1H5zM7 0h1v1H7zM9 0h1v1H9zM11 0h1v1h-1zM13 0h1v1h-1z" fill="#14206a"/>
<path d="M1 1h1v1H1zM3 1h1v1H3zM5 1h1v1H5zM7 1h1v1H7zM9 1h1v1H9zM11 1h1v1h-1zM13 1h1v1h-1z" fill="#ffffff"/>
<rect x="1" y="3" width="6" height="1" fill="#e0e8ff"/><rect x="7" y="3" width="7" height="1" fill="#b0c0f4"/>
<path d="M1 5h2v2H1zM4 5h2v2H4zM7 5h2v2H7zM10 5h2v2h-2zM13 5h2v2h-2zM1 8h2v2H1zM4 8h2v2H4zM7 8h2v2H7zM10 8h2v2h-2zM13 8h1v2h-1zM1 11h2v2H1zM4 11h2v2H4zM7 11h2v2H7zM10 11h2v2h-2zM13 11h1v2h-1z" fill="#fff"/>
</svg></div><div class="card" style="left:373px;top:131px"><div class="ch"><span class="hw">basisdaten</span> <span class="dots">...</span></div></div><div class="ci" style="left:402px;top:168px"><svg width="16" height="16" viewBox="0 0 16 16" shape-rendering="crispEdges"><path d="M8 0h1v1h-1zM10 0h2v1h-2zM6 1h4v1h-4zM11 1h1v1h-1zM4 2h8v1h-8zM12 3h1v1h-1zM13 4h1v1h-1zM14 5h1v1h-1zM15 6h1v1h-1zM6 7h1v1h-1zM15 7h1v1h-1zM1 8h1v1h-1zM9 8h1v1h-1zM14 8h1v1h-1zM10 9h1v1h-1zM14 9h1v1h-1zM13 10h1v1h-1zM11 11h1v1h-1zM11 12h1v1h-1zM10 13h1v1h-1zM9 14h1v1h-1zM8 15h1v1h-1z" fill="#22308a"/><path d="M10 1h1v1h-1zM13 8h1v1h-1zM13 9h1v1h-1z" fill="#8098e0"/><path d="M3 3h1v1h-1zM1 5h2v1h-2zM0 6h3v1h-3z" fill="#5a78d0"/><path d="M4 3h1v1h-1zM1 9h1v1h-1zM1 10h1v1h-1z" fill="#3a50a8"/><path d="M5 3h7v1h-7zM4 4h9v1h-9zM6 5h8v1h-8z" fill="#34469c"/><path d="M2 4h2v1h-2zM0 7h3v1h-3zM10 8h3v1h-3zM9 9h1v1h-1zM11 9h2v1h-2zM9 10h1v1h-1zM11 10h2v1h-2zM1 11h1v1h-1zM9 11h1v1h-1zM1 12h1v1h-1zM9 12h1v1h-1zM1 13h1v1h-1zM9 13h1v1h-1zM6 15h2v1h-2z" fill="#4a64c0"/><path d="M3 5h3v1h-3zM8 8h1v1h-1zM8 9h1v1h-1zM10 10h1v1h-1zM8 11h1v1h-1zM10 11h1v1h-1zM8 12h1v1h-1zM10 12h1v1h-1zM8 13h1v1h-1zM8 14h1v1h-1z" fill="#b8c8fa"/><path d="M3 6h3v1h-3zM4 7h2v1h-2z" fill="#d4e0ff"/><path d="M6 6h8v1h-8z" fill="#4a62b8"/><path d="M14 6h1v1h-1zM7 7h8v1h-8z" fill="#6a84d0"/><path d="M3 7h1v1h-1zM2 8h6v1h-6zM2 9h6v1h-6zM2 10h1v1h-1zM4 10h1v1h-1zM7 10h2v1h-2zM2 11h1v1h-1zM4 11h1v1h-1zM7 11h1v1h-1zM2 12h1v1h-1zM4 12h4v1h-4zM2 13h6v1h-6zM6 14h2v1h-2z" fill="#f2f6ff"/><path d="M3 10h1v1h-1zM5 10h2v1h-2zM3 11h1v1h-1zM5 11h2v1h-2zM3 12h1v1h-1z" fill="#7890e0"/><path d="M2 14h4v1h-4z" fill="#a0b8f0"/></svg></div><div class="card" style="left:463px;top:131px"><div class="ch"><span class="hw">basisdaten</span> <span class="dots">...</span></div></div><div class="ci" style="left:492px;top:168px"><svg width="16" height="16" viewBox="0 0 16 16" shape-rendering="crispEdges"><path d="M8 0h1v1h-1zM10 0h2v1h-2zM6 1h4v1h-4zM11 1h1v1h-1zM4 2h8v1h-8zM12 3h1v1h-1zM13 4h1v1h-1zM14 5h1v1h-1zM15 6h1v1h-1zM6 7h1v1h-1zM15 7h1v1h-1zM1 8h1v1h-1zM9 8h1v1h-1zM14 8h1v1h-1zM10 9h1v1h-1zM14 9h1v1h-1zM13 10h1v1h-1zM11 11h1v1h-1zM11 12h1v1h-1zM10 13h1v1h-1zM9 14h1v1h-1zM8 15h1v1h-1z" fill="#22308a"/><path d="M10 1h1v1h-1zM13 8h1v1h-1zM13 9h1v1h-1z" fill="#8098e0"/><path d="M3 3h1v1h-1zM1 5h2v1h-2zM0 6h3v1h-3z" fill="#5a78d0"/><path d="M4 3h1v1h-1zM1 9h1v1h-1zM1 10h1v1h-1z" fill="#3a50a8"/><path d="M5 3h7v1h-7zM4 4h9v1h-9zM6 5h8v1h-8z" fill="#34469c"/><path d="M2 4h2v1h-2zM0 7h3v1h-3zM10 8h3v1h-3zM9 9h1v1h-1zM11 9h2v1h-2zM9 10h1v1h-1zM11 10h2v1h-2zM1 11h1v1h-1zM9 11h1v1h-1zM1 12h1v1h-1zM9 12h1v1h-1zM1 13h1v1h-1zM9 13h1v1h-1zM6 15h2v1h-2z" fill="#4a64c0"/><path d="M3 5h3v1h-3zM8 8h1v1h-1zM8 9h1v1h-1zM10 10h1v1h-1zM8 11h1v1h-1zM10 11h1v1h-1zM8 12h1v1h-1zM10 12h1v1h-1zM8 13h1v1h-1zM8 14h1v1h-1z" fill="#b8c8fa"/><path d="M3 6h3v1h-3zM4 7h2v1h-2z" fill="#d4e0ff"/><path d="M6 6h8v1h-8z" fill="#4a62b8"/><path d="M14 6h1v1h-1zM7 7h8v1h-8z" fill="#6a84d0"/><path d="M3 7h1v1h-1zM2 8h6v1h-6zM2 9h6v1h-6zM2 10h1v1h-1zM4 10h1v1h-1zM7 10h2v1h-2zM2 11h1v1h-1zM4 11h1v1h-1zM7 11h1v1h-1zM2 12h1v1h-1zM4 12h4v1h-4zM2 13h6v1h-6zM6 14h2v1h-2z" fill="#f2f6ff"/><path d="M3 10h1v1h-1zM5 10h2v1h-2zM3 11h1v1h-1zM5 11h2v1h-2zM3 12h1v1h-1z" fill="#7890e0"/><path d="M2 14h4v1h-4z" fill="#a0b8f0"/></svg></div><div class="card" style="left:553px;top:131px"><div class="ch"><span class="hw">tabellediag</span> <span class="dots">...</span></div></div><div class="ci" style="left:582px;top:168px"><svg width="16" height="16" viewBox="0 0 16 16" shape-rendering="crispEdges">
<rect x="1" y="1" width="3" height="4" fill="#ececec"/>
<path d="M0 15h16v1H0z" fill="#dcdcdc"/>
<path d="M1 12h1v3H1zM4 11h1v4H4zM7 10h1v5H7zM10 8h1v7h-1zM13 5h1v10h-1z" fill="#e4e4e4"/>
<path d="M2 11h2v1H2zM4 10h2v1H4zM6 9h2v1H6zM8 8h1v1H8zM9 7h1v1H9zM10 6h1v1h-1zM11 4h1v2h-1zM12 2h1v2h-1zM13 0h2v1h-2zM14 1h1v1h-1z" fill="#d8d8d8"/>
</svg></div><div class="card" style="left:643px;top:131px"><div class="ch"><span class="hw">tabelledruc</span> <span class="dots">...</span></div></div><div class="ci" style="left:672px;top:168px"><svg width="16" height="16" viewBox="0 0 16 16" fill="none" stroke="#d4d4d4" stroke-width="1" shape-rendering="crispEdges">
<path d="M2.5 4V0.5h11V4"/><rect x="0.5" y="4.5" width="15" height="5"/><path d="M0.5 9.5v4h2M15.5 9.5v4h-2"/><rect x="2.5" y="9.5" width="11" height="6"/>
<path d="M4 11.5h8M4 12.5h8" stroke="#e0e0e0"/><path d="M12 6.5h1.5v1.5" stroke="#e0e0e0"/>
</svg></div><div class="card" style="left:283px;top:223px"><div class="ch"><span class="hw">tabellefilt</span> <span class="dots">...</span></div></div><div class="ci" style="left:312px;top:260px"><svg width="16" height="16" viewBox="0 0 16 16" fill="none" stroke="#d6d6d6" stroke-width="1">
<rect x="0.5" y="0.5" width="15" height="3" shape-rendering="crispEdges"/><path d="M1.8 4 L6.5 9.5 V15.5 L9.3 11.5 V9.5 L14.2 4"/><path d="M7 10 V14 L9 11 V10Z" fill="#ececec" stroke="none"/>
</svg></div><div class="card" style="left:373px;top:223px"><div class="ch"><span class="hw">tabellegrup</span> <span class="dots">...</span></div></div><div class="ci" style="left:402px;top:260px"><svg width="16" height="16" viewBox="0 0 16 16" fill="none" stroke="#d8d8d8" stroke-width="1">
<circle cx="2.5" cy="2.5" r="2"/><circle cx="8" cy="2.5" r="2"/><circle cx="13.5" cy="2.5" r="2"/>
<circle cx="2.5" cy="8" r="2"/><rect x="6" y="6" width="4" height="4"/><circle cx="13.5" cy="8" r="2"/>
<circle cx="2.5" cy="13.5" r="2"/><circle cx="8" cy="13.5" r="2"/>
</svg></div><div class="card" style="left:463px;top:223px"><div class="ch"><span class="hw">tabelleopti</span> <span class="dots">...</span></div></div><div class="ci" style="left:492px;top:260px"><svg width="16" height="16" viewBox="0 0 16 16" fill="none" stroke="#d8d8d8" stroke-width="1" shape-rendering="crispEdges">
<rect x="0" y="0" width="3" height="3" fill="#d0d0d0" stroke="none"/>
<rect x="0.5" y="0.5" width="15" height="15"/><path d="M2.5 0v16M7.5 0v16M12.5 0v16M0 2.5h16M0 5.5h16M0 8.5h16M0 10.5h16M0 13.5h16" stroke="#e2e2e2"/>
<path d="M0.5 0v16M2.5 0v16M12.5 0v16M15.5 0v16M0 3.5h16M0 9.5h16M0 15.5h16"/>
</svg></div><div class="card" style="left:553px;top:223px"><div class="ch"><span class="hw">tabellediag</span> <span class="dots">...</span></div></div><div class="ci" style="left:582px;top:260px"><svg width="16" height="16" viewBox="0 0 16 16" shape-rendering="crispEdges">
<rect x="1" y="1" width="3" height="4" fill="#ececec"/>
<path d="M0 15h16v1H0z" fill="#dcdcdc"/>
<path d="M1 12h1v3H1zM4 11h1v4H4zM7 10h1v5H7zM10 8h1v7h-1zM13 5h1v10h-1z" fill="#e4e4e4"/>
<path d="M2 11h2v1H2zM4 10h2v1H4zM6 9h2v1H6zM8 8h1v1H8zM9 7h1v1H9zM10 6h1v1h-1zM11 4h1v2h-1zM12 2h1v2h-1zM13 0h2v1h-2zM14 1h1v1h-1z" fill="#d8d8d8"/>
</svg></div><div class="card" style="left:643px;top:223px"><div class="ch"><span class="hw">tabelledruc</span> <span class="dots">...</span></div></div><div class="ci" style="left:672px;top:260px"><svg width="16" height="16" viewBox="0 0 16 16" fill="none" stroke="#e0e0e0" stroke-width="1" shape-rendering="crispEdges">
<path d="M2.5 4V0.5h11V4"/><rect x="0.5" y="4.5" width="15" height="5"/><path d="M0.5 9.5v4h2M15.5 9.5v4h-2"/><rect x="2.5" y="9.5" width="11" height="6"/>
<path d="M4 11.5h8M4 12.5h8" stroke="#eaeaea"/><path d="M12 6.5h1.5v1.5" stroke="#eaeaea"/>
</svg></div><div class="card" style="left:283px;top:315px"><div class="ch"><span class="hw">tabellefilt</span> <span class="dots">...</span></div></div><div class="ci" style="left:312px;top:352px"><svg width="16" height="16" viewBox="0 0 16 16" fill="none" stroke="#e4e4e4" stroke-width="1">
<rect x="0.5" y="0.5" width="15" height="3" shape-rendering="crispEdges"/><path d="M1.8 4 L6.5 9.5 V15.5 L9.3 11.5 V9.5 L14.2 4"/><path d="M7 10 V14 L9 11 V10Z" fill="#f2f2f2" stroke="none"/>
</svg></div><div class="card" style="left:373px;top:315px"><div class="ch"><span class="hw">tabellegrup</span> <span class="dots">...</span></div></div><div class="ci" style="left:402px;top:352px"><svg width="16" height="16" viewBox="0 0 16 16" fill="none" stroke="#e6e6e6" stroke-width="1">
<circle cx="2.5" cy="2.5" r="2"/><circle cx="8" cy="2.5" r="2"/><circle cx="13.5" cy="2.5" r="2"/>
<circle cx="2.5" cy="8" r="2"/><rect x="6" y="6" width="4" height="4"/><circle cx="13.5" cy="8" r="2"/>
<circle cx="2.5" cy="13.5" r="2"/><circle cx="8" cy="13.5" r="2"/>
</svg></div><div class="card" style="left:463px;top:315px"><div class="ch"><span class="hw">tabelleopti</span> <span class="dots">...</span></div></div><div class="ci" style="left:492px;top:352px"><svg width="16" height="16" viewBox="0 0 16 16" fill="none" stroke="#e4e4e4" stroke-width="1" shape-rendering="crispEdges">
<rect x="0" y="0" width="3" height="3" fill="#e0e0e0" stroke="none"/>
<rect x="0.5" y="0.5" width="15" height="15"/><path d="M2.5 0v16M7.5 0v16M12.5 0v16M0 2.5h16M0 5.5h16M0 8.5h16M0 10.5h16M0 13.5h16" stroke="#ececec"/>
<path d="M0.5 0v16M2.5 0v16M12.5 0v16M15.5 0v16M0 3.5h16M0 9.5h16M0 15.5h16"/>
</svg></div><div class="card" style="left:553px;top:315px"><div class="ch"><span class="hw">tabellesumm</span> <span class="dots">...</span></div></div><div class="ci" style="left:582px;top:352px"><svg width="16" height="16" viewBox="0 0 16 16" shape-rendering="crispEdges">
<rect x="0" y="0" width="3" height="3" fill="#b0b0b0"/>
<path d="M4 0h12v3H4zM0 4h3v12H0zM4 4h1v12H4zM4 3h12v1H4z" fill="#cfcfcf"/>
<path d="M5 1h2v1H5zM9 1h2v1H9zM12 1h3v1h-3zM1 5h1v3H1zM1 10h1v3H1z" fill="#fff"/>
<rect x="6" y="6" width="10" height="10" fill="#b8b8b8"/>
<path d="M8 8h6v1h-4v1h1v1h1v1h-1v1h-1v1h4v1H8v-1h1v-1h1v-1h1v-0h-1v-1H9V9H8z" fill="#fff"/>
</svg></div><div class="card" style="left:643px;top:315px"><div class="ch"><span class="hw">tabellesumm</span> <span class="dots">...</span></div></div><div class="ci" style="left:672px;top:352px"><svg width="16" height="16" viewBox="0 0 16 16" shape-rendering="crispEdges">
<rect x="0" y="0" width="3" height="3" fill="#d4d4d4"/>
<path d="M4 0h12v3H4zM0 4h3v12H0zM4 4h1v12H4zM4 3h12v1H4z" fill="#e2e2e2"/>
<path d="M5 1h2v1H5zM9 1h2v1H9zM12 1h3v1h-3zM1 5h1v3H1zM1 10h1v3H1z" fill="#fff"/>
<rect x="6" y="6" width="10" height="10" fill="#d8d8d8"/>
<path d="M8 8h6v1h-4v1h1v1h1v1h-1v1h-1v1h4v1H8v-1h1v-1h1v-1h1v-0h-1v-1H9V9H8z" fill="#fff"/>
</svg></div><div class="card" style="left:283px;top:407px"><div class="ch"><span class="hw">kunde</span> <span class="dots">...</span></div></div><div class="ci" style="left:312px;top:444px"><svg width="16" height="16" viewBox="0 0 16 16">
<ellipse cx="12" cy="5.5" rx="3.2" ry="4" fill="#e4d488"/><ellipse cx="11.5" cy="6.5" rx="2" ry="2.6" fill="#ecc890"/>
<path d="M8 13.5 Q8 9.5 12 9.5 Q16 9.5 16 13 Q12 15 8 13.5Z" fill="#e8e800"/>
<ellipse cx="5" cy="5" rx="3.2" ry="3.8" fill="#7a6448"/><ellipse cx="5.2" cy="6.5" rx="2.2" ry="2.8" fill="#e8c890"/>
<path d="M0.8 13 Q0.8 9 5 9 Q10 9 10 13 Q9 16 5 16 Q1 15.5 0.8 13Z" fill="#dcdc00"/>
<path d="M1.5 14 Q5 16 9.5 14 L9 15.5 Q5 16.5 2 15.5Z" fill="#a8a800"/>
</svg></div><div class="card" style="left:373px;top:407px"><div class="ch"><span class="hw">14x15.png</span> <span class="dots">...</span></div></div><div class="ci" style="left:402px;top:444px"><svg width="16" height="16" viewBox="0 0 16 16">
<rect x="5.5" y="1.5" width="7" height="2" fill="#ececec" stroke="#a8a8a8" stroke-width="1"/>
<path d="M10 3.2 H12.6 Q14 3.5 14 5.2" stroke="#111" stroke-width="1.6" fill="none"/>
<rect x="8" y="5.5" width="2" height="8.5" fill="#e24c12"/>
<rect x="9" y="6.5" width="0.9" height="3" fill="#ffd436"/>
<rect x="10" y="3.5" width="1.3" height="10.5" fill="#161616"/>
<rect x="8" y="13.5" width="3.3" height="1" fill="#333"/>
<circle cx="4.5" cy="6" r="2.7" fill="#fff" stroke="#111" stroke-width="1"/>
<rect x="4" y="3" width="1.2" height="2.2" fill="#111"/>
<circle cx="4.6" cy="6.3" r="0.8" fill="#222"/>
<rect x="3.5" y="8.3" width="2" height="5.7" fill="#fff" stroke="#111" stroke-width="1"/>
<rect x="3.8" y="8" width="1.4" height="1" fill="#fff"/>
<rect x="4" y="15" width="2.5" height="1" fill="#b8b8b8"/>
</svg></div><div class="card" style="left:463px;top:407px"><div class="ch"><span class="hw">farbe</span> <span class="dots">...</span></div></div><div class="ci" style="left:492px;top:444px"><svg width="16" height="16" viewBox="0 0 16 16">
<defs><radialGradient id="pg" cx="0.65" cy="0.35" r="0.7"><stop offset="0" stop-color="#f8d850"/><stop offset="0.7" stop-color="#d0a018"/><stop offset="1" stop-color="#a87c10"/></radialGradient></defs>
<path d="M8 3 Q13 2 14.8 6 Q16 10.5 12.5 12.8 Q9 15 5 14.2 Q2.8 13.6 3.2 11 Q3.6 9.2 5.5 9 Q6.2 8.8 5.9 7.8 Q5.2 4.5 8 3Z" fill="url(#pg)" stroke="#7a5a08" stroke-width="0.9"/>
<circle cx="9.3" cy="5.4" r="1.1" fill="#c84868"/><circle cx="12" cy="5" r="1.2" fill="#f8f4a0"/><circle cx="7.8" cy="7.8" r="1" fill="#c8c4b8"/>
<ellipse cx="12.2" cy="9.4" rx="1.3" ry="1.5" fill="#98ec70"/><ellipse cx="9.6" cy="11.6" rx="1.1" ry="1.4" fill="#88c0ff"/><ellipse cx="6.3" cy="11.8" rx="1.6" ry="1.2" fill="#f090f0"/>
</svg></div><div class="card" style="left:553px;top:407px"><div class="ch"><span class="hw">adressartik</span> <span class="dots">...</span></div></div><div class="ci" style="left:582px;top:444px"><svg width="16" height="16" viewBox="0 0 16 16" shape-rendering="crispEdges"><g transform="translate(0,-1)">
<rect x="2" y="2" width="8" height="13" fill="#5a74cc"/>
<rect x="3" y="3" width="3" height="8" fill="#d8e2ff"/><rect x="5" y="5" width="2" height="7" fill="#b8c8f8"/><rect x="6" y="10" width="2" height="3" fill="#e0e8ff"/>
<rect x="1" y="11" width="4" height="5" fill="#14206e"/><rect x="5" y="13" width="4" height="3" fill="#2a3c94"/>
<rect x="10" y="1" width="4" height="2" fill="#3048a8"/><rect x="10" y="3" width="1" height="4" fill="#3048a8"/><rect x="13" y="3" width="2" height="3" fill="#2a3c98"/>
<rect x="11" y="4" width="2" height="3" fill="#c0d0ff"/>
<rect x="9" y="8" width="8" height="8" fill="#4a64c4"/><rect x="11" y="9" width="4" height="4" fill="#e8eeff"/><rect x="12" y="10" width="2" height="1" fill="#6a84d8"/><rect x="10" y="14" width="4" height="1" fill="#e8eeff"/>
</g></svg></div><div class="card" style="left:643px;top:407px"><div class="ch"><span class="hw">adressartik</span> <span class="dots">...</span></div></div><div class="ci" style="left:672px;top:444px"><svg width="16" height="16" viewBox="0 0 16 16" shape-rendering="crispEdges"><g transform="translate(0,-1)">
<rect x="2" y="2" width="8" height="13" fill="#5a74cc"/>
<rect x="3" y="3" width="3" height="8" fill="#d8e2ff"/><rect x="5" y="5" width="2" height="7" fill="#b8c8f8"/><rect x="6" y="10" width="2" height="3" fill="#e0e8ff"/>
<rect x="1" y="11" width="4" height="5" fill="#14206e"/><rect x="5" y="13" width="4" height="3" fill="#2a3c94"/>
<rect x="10" y="1" width="4" height="2" fill="#3048a8"/><rect x="10" y="3" width="1" height="4" fill="#3048a8"/><rect x="13" y="3" width="2" height="3" fill="#2a3c98"/>
<rect x="11" y="4" width="2" height="3" fill="#c0d0ff"/>
<rect x="9" y="8" width="8" height="8" fill="#4a64c4"/><rect x="11" y="9" width="4" height="4" fill="#e8eeff"/><rect x="12" y="10" width="2" height="1" fill="#6a84d8"/><rect x="10" y="14" width="4" height="1" fill="#e8eeff"/>
</g></svg></div><div class="card" style="left:283px;top:499px"><div class="ch"><span class="hw">einkaufware</span> <span class="dots">...</span></div></div><div class="ci" style="left:312px;top:536px"><svg width="16" height="16" viewBox="0 0 16 16" shape-rendering="crispEdges">
<rect x="2" y="2" width="2" height="2" fill="#8098e4"/><rect x="3" y="1" width="2" height="1" fill="#90a8ee"/><rect x="4" y="3" width="1" height="1" fill="#6a82d8"/>
<rect x="5" y="2" width="3" height="4" fill="#6078d0"/><rect x="4" y="5" width="4" height="2" fill="#1e2e90"/><rect x="5" y="3" width="2" height="2" fill="#8aa0e8"/>
<rect x="7" y="2" width="8" height="13" fill="#94aaf2"/>
<rect x="14" y="3" width="1" height="11" fill="#5a72cc"/><rect x="7" y="2" width="7" height="1" fill="#7088dc"/>
<rect x="9" y="3" width="4" height="2" fill="#e8eeff"/><rect x="8" y="5" width="6" height="1" fill="#5a70d0"/><rect x="9" y="6" width="4" height="1" fill="#f0f4ff"/>
<rect x="7" y="8" width="7" height="1" fill="#5a70d0"/><rect x="8" y="9" width="5" height="1" fill="#f0f4ff"/>
<rect x="8" y="10" width="5" height="4" fill="#a8bcf8"/>
<rect x="8" y="14" width="6" height="1" fill="#4a62c0"/><rect x="12" y="12" width="1" height="1" fill="#f0f4ff"/>
</svg></div><div class="card" style="left:373px;top:499px"><div class="ch"><span class="hw">einkaufware</span> <span class="dots">...</span></div></div><div class="ci" style="left:402px;top:536px"><svg width="16" height="16" viewBox="0 0 16 16" shape-rendering="crispEdges">
<rect x="2" y="2" width="2" height="2" fill="#8098e4"/><rect x="3" y="1" width="2" height="1" fill="#90a8ee"/><rect x="4" y="3" width="1" height="1" fill="#6a82d8"/>
<rect x="5" y="2" width="3" height="4" fill="#6078d0"/><rect x="4" y="5" width="4" height="2" fill="#1e2e90"/><rect x="5" y="3" width="2" height="2" fill="#8aa0e8"/>
<rect x="7" y="2" width="8" height="13" fill="#94aaf2"/>
<rect x="14" y="3" width="1" height="11" fill="#5a72cc"/><rect x="7" y="2" width="7" height="1" fill="#7088dc"/>
<rect x="9" y="3" width="4" height="2" fill="#e8eeff"/><rect x="8" y="5" width="6" height="1" fill="#5a70d0"/><rect x="9" y="6" width="4" height="1" fill="#f0f4ff"/>
<rect x="7" y="8" width="7" height="1" fill="#5a70d0"/><rect x="8" y="9" width="5" height="1" fill="#f0f4ff"/>
<rect x="8" y="10" width="5" height="4" fill="#a8bcf8"/>
<rect x="8" y="14" width="6" height="1" fill="#4a62c0"/><rect x="12" y="12" width="1" height="1" fill="#f0f4ff"/>
</svg></div><div class="card" style="left:463px;top:499px"><div class="ch"><span class="hw">aufklappen</span> <span class="dots">...</span></div></div><div class="card" style="left:553px;top:499px"><div class="ch"><span class="hw">art</span> <span class="dots">...</span></div></div><div class="ci" style="left:582px;top:536px"><svg width="16" height="16" viewBox="0 0 16 16">
<defs><linearGradient id="ag" x1="0" y1="0" x2="0" y2="1"><stop offset="0" stop-color="#84aaee"/><stop offset="0.6" stop-color="#a8c8f8"/><stop offset="1" stop-color="#e0f8ff"/></linearGradient></defs>
<rect x="8.5" y="1.5" width="7" height="5" rx="0.6" fill="url(#ag)" stroke="#163a80"/>
<rect x="0.5" y="5.5" width="7" height="5" rx="0.6" fill="url(#ag)" stroke="#163a80"/>
<rect x="8.5" y="9.5" width="7" height="5" rx="0.6" fill="url(#ag)" stroke="#163a80"/>
</svg></div><div class="card" style="left:643px;top:499px"><div class="ch"><span class="hw">art</span> <span class="dots">...</span></div></div><div class="ci" style="left:672px;top:536px"><svg width="16" height="16" viewBox="0 0 16 16">
<defs><linearGradient id="ag" x1="0" y1="0" x2="0" y2="1"><stop offset="0" stop-color="#84aaee"/><stop offset="0.6" stop-color="#a8c8f8"/><stop offset="1" stop-color="#e0f8ff"/></linearGradient></defs>
<rect x="8.5" y="1.5" width="7" height="5" rx="0.6" fill="url(#ag)" stroke="#163a80"/>
<rect x="0.5" y="5.5" width="7" height="5" rx="0.6" fill="url(#ag)" stroke="#163a80"/>
<rect x="8.5" y="9.5" width="7" height="5" rx="0.6" fill="url(#ag)" stroke="#163a80"/>
</svg></div><div class="selcard" style="left:282px;top:130px"></div>

<!-- side toolbar -->
<svg style="left:739px;top:131px" width="14" height="14" viewBox="0 0 14 14">
<path d="M8.33 0.33 L9.60 0.72 L10.06 2.43 L10.89 3.11 L12.65 3.22 L13.28 4.40 L12.39 5.93 L12.50 7.00 L13.67 8.33 L13.28 9.60 L11.57 10.06 L10.89 10.89 L10.78 12.65 L9.60 13.28 L8.07 12.39 L7.00 12.50 L5.67 13.67 L4.40 13.28 L3.94 11.57 L3.11 10.89 L1.35 10.78 L0.72 9.60 L1.61 8.07 L1.50 7.00 L0.33 5.67 L0.72 4.40 L2.43 3.94 L3.11 3.11 L3.22 1.35 L4.40 0.72 L5.93 1.61 L7.00 1.50Z" fill="#5aa2a8"/>
<path d="M4.5 5.5 Q6 3.5 8.5 4.5 M5 9 Q7.5 10.5 9.5 8.5" stroke="#cfe8ea" stroke-width="1.2" fill="none"/>
<path d="M7 6.5 L9 8" stroke="#cfe8ea" stroke-width="1"/>
</svg>
<svg style="left:741px;top:149px" width="10" height="10" viewBox="0 0 10 10"><rect x="1" y="1" width="7" height="2" fill="#b8b8b8"/><path d="M0 9 L4.5 4 L9 9Z" fill="#b8b8b8"/></svg>
<svg style="left:741px;top:165px" width="10" height="9" viewBox="0 0 10 9"><path d="M0 6 L4.5 1 L9 6Z" fill="#b8b8b8"/><rect x="3" y="6" width="3" height="2" fill="#b8b8b8"/></svg>

<div class="ci" style="left:738px;top:303px"><svg width="16" height="16" viewBox="0 0 16 16" fill="none" stroke="#d4d4d4" stroke-width="1" shape-rendering="crispEdges">
<path d="M2.5 4V0.5h11V4"/><rect x="0.5" y="4.5" width="15" height="5"/><path d="M0.5 9.5v4h2M15.5 9.5v4h-2"/><rect x="2.5" y="9.5" width="11" height="6"/>
<path d="M4 11.5h8M4 12.5h8" stroke="#e0e0e0"/><path d="M12 6.5h1.5v1.5" stroke="#e0e0e0"/>
</svg></div>
<div style="left:738px;top:322px;width:16px;height:1px;background:#b8b8b8"></div>
<div class="ci" style="left:738px;top:326px"><svg width="16" height="16" viewBox="0 0 16 16" shape-rendering="crispEdges">
<rect x="1" y="1" width="3" height="4" fill="#ececec"/>
<path d="M0 15h16v1H0z" fill="#dcdcdc"/>
<path d="M1 12h1v3H1zM4 11h1v4H4zM7 10h1v5H7zM10 8h1v7h-1zM13 5h1v10h-1z" fill="#e4e4e4"/>
<path d="M2 11h2v1H2zM4 10h2v1H4zM6 9h2v1H6zM8 8h1v1H8zM9 7h1v1H9zM10 6h1v1h-1zM11 4h1v2h-1zM12 2h1v2h-1zM13 0h2v1h-2zM14 1h1v1h-1z" fill="#d8d8d8"/>
</svg></div>
<div style="left:738px;top:345px;width:16px;height:1px;background:#b8b8b8"></div>
<div class="ci" style="left:738px;top:350px"><svg width="16" height="16" viewBox="0 0 16 16" fill="none" stroke="#d8d8d8" stroke-width="1">
<circle cx="2.5" cy="2.5" r="2"/><circle cx="8" cy="2.5" r="2"/><circle cx="13.5" cy="2.5" r="2"/>
<circle cx="2.5" cy="8" r="2"/><rect x="6" y="6" width="4" height="4"/><circle cx="13.5" cy="8" r="2"/>
<circle cx="2.5" cy="13.5" r="2"/><circle cx="8" cy="13.5" r="2"/>
</svg></div>
<div style="left:738px;top:368px;width:16px;height:1px;background:#b8b8b8"></div>
<div class="ci" style="left:738px;top:372px"><svg width="16" height="16" viewBox="0 0 16 16" shape-rendering="crispEdges">
<rect x="0" y="0" width="3" height="3" fill="#b0b0b0"/>
<path d="M4 0h12v3H4zM0 4h3v12H0zM4 4h1v12H4zM4 3h12v1H4z" fill="#cfcfcf"/>
<path d="M5 1h2v1H5zM9 1h2v1H9zM12 1h3v1h-3zM1 5h1v3H1zM1 10h1v3H1z" fill="#fff"/>
<rect x="6" y="6" width="10" height="10" fill="#b8b8b8"/>
<path d="M8 8h6v1h-4v1h1v1h1v1h-1v1h-1v1h4v1H8v-1h1v-1h1v-1h1v-0h-1v-1H9V9H8z" fill="#fff"/>
</svg></div>
<div style="left:738px;top:391px;width:16px;height:1px;background:#b8b8b8"></div>
<div class="ci" style="left:738px;top:395px"><svg width="16" height="16" viewBox="0 0 16 16" fill="none" stroke="#d8d8d8" stroke-width="1" shape-rendering="crispEdges">
<rect x="0" y="0" width="3" height="3" fill="#d0d0d0" stroke="none"/>
<rect x="0.5" y="0.5" width="15" height="15"/><path d="M2.5 0v16M7.5 0v16M12.5 0v16M0 2.5h16M0 5.5h16M0 8.5h16M0 10.5h16M0 13.5h16" stroke="#e2e2e2"/>
<path d="M0.5 0v16M2.5 0v16M12.5 0v16M15.5 0v16M0 3.5h16M0 9.5h16M0 15.5h16"/>
</svg></div>
<div style="left:738px;top:414px;width:16px;height:1px;background:#b8b8b8"></div>
<div class="ci" style="left:738px;top:418px"><svg width="16" height="16" viewBox="0 0 16 16" fill="none" stroke="#d6d6d6" stroke-width="1">
<rect x="0.5" y="0.5" width="15" height="3" shape-rendering="crispEdges"/><path d="M1.8 4 L6.5 9.5 V15.5 L9.3 11.5 V9.5 L14.2 4"/><path d="M7 10 V14 L9 11 V10Z" fill="#ececec" stroke="none"/>
</svg></div>

<svg style="left:741px;top:562px" width="10" height="9" viewBox="0 0 10 9"><rect x="3" y="1" width="3" height="3" fill="#b8b8b8"/><path d="M0 3 L9 3 L4.5 8Z" fill="#b8b8b8"/></svg>
<svg style="left:741px;top:577px" width="10" height="10" viewBox="0 0 10 10"><path d="M0 1 L9 1 L4.5 6Z" fill="#b8b8b8"/><rect x="1" y="7" width="7" height="2" fill="#b8b8b8"/></svg>

</body></html>
